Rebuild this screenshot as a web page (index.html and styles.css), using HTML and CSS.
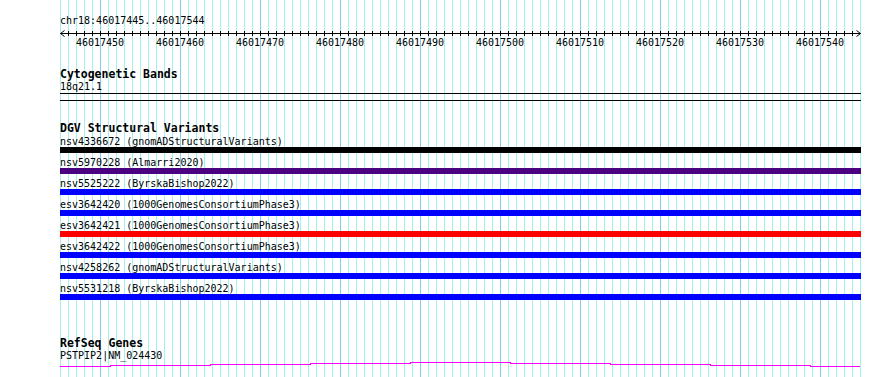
FILE: index.html
```html
<!DOCTYPE html>
<html lang="en">
<head>
  <meta charset="UTF-8" />
  <title>chr18:46017445..46017544</title>
  <link rel="stylesheet" href="styles.css">
</head>
<body>
  <div class="panel">
    <div class="ruler-title">chr18:46017445..46017544</div>
    <svg class="ruler" width="801" height="22" viewBox="0 0 801 22">
      <g id="ruler-ticks" stroke="#000" shape-rendering="crispEdges"></g>
      <path d="M0.5 6.5H800.5M4.5 3.5L0.5 6.5L4.5 9.5M796.5 3.5L800.5 6.5L796.5 9.5" stroke="#000" fill="none"/>
      <g id="ruler-labels" class="ruler-labels" text-anchor="middle"></g>
    </svg>

    <div class="track">
      <div class="track-name">Cytogenetic Bands</div>
      <div class="feat-label">18q21.1</div>
      <div class="band"></div>
    </div>

    <div class="track track-dgv">
      <div class="track-name">DGV Structural Variants</div>
      <div id="dgv-rows"></div>
    </div>

    <div class="track track-genes">
      <div class="track-name">RefSeq Genes</div>
      <div class="feat-label">PSTPIP2|NM_024430</div>
      <svg class="gene" width="801" height="8" viewBox="0 0 801 8">
        <polyline fill="none" stroke="#ff00ff" shape-rendering="crispEdges"
          points="0,5.5 50,5.5 50,4.5 150,4.5 150,3.5 250,3.5 250,2.5 350,2.5 350,1.5 450,1.5 450,2.5 550,2.5 550,3.5 650,3.5 650,4.5 750,4.5 750,5.5 800,5.5"/>
      </svg>
    </div>
  </div>

  <script>
    const ns = 'http://www.w3.org/2000/svg';
    const ticks = document.getElementById('ruler-ticks');
    const labels = document.getElementById('ruler-labels');
    const start = 46017445;

    for (let i = 1; i < 100; i++) {
      const x = i * 8 + 0.5;
      const line = document.createElementNS(ns, 'line');
      line.setAttribute('x1', x);
      line.setAttribute('x2', x);
      line.setAttribute('y1', 4);
      line.setAttribute('y2', 9);
      ticks.appendChild(line);
      if ((start + i) % 10 === 0) {
        const t = document.createElementNS(ns, 'text');
        t.setAttribute('x', i * 8);
        t.setAttribute('y', 19);
        t.textContent = start + i;
        labels.appendChild(t);
      }
    }

    const variants = [
      ['nsv4336672', 'gnomADStructuralVariants', 'black'],
      ['nsv5970228', 'Almarri2020', 'purple'],
      ['nsv5525222', 'ByrskaBishop2022', 'blue'],
      ['esv3642420', '1000GenomesConsortiumPhase3', 'blue'],
      ['esv3642421', '1000GenomesConsortiumPhase3', 'red'],
      ['esv3642422', '1000GenomesConsortiumPhase3', 'blue'],
      ['nsv4258262', 'gnomADStructuralVariants', 'blue'],
      ['nsv5531218', 'ByrskaBishop2022', 'blue']
    ];
    const rows = document.getElementById('dgv-rows');
    variants.forEach(([id, study, color]) => {
      const row = document.createElement('div');
      row.className = 'sv-row';
      row.innerHTML = `<div class="feat-label">${id} (${study})</div><div class="sv-bar sv-${color}"></div>`;
      rows.appendChild(row);
    });
  </script>
</body>
</html>
```

FILE: styles.css
```css
body {
  margin: 0;
  background: #fff;
  color: #000;
  font-family: "DejaVu Sans Mono", monospace;
  font-size: 10px;
}

.panel {
  margin-left: 60px;
  width: 801px;
  min-height: 377px;
  background-image:
    repeating-linear-gradient(90deg, transparent 0 40px, #84ccf0 40px 41px, transparent 41px 80px),
    repeating-linear-gradient(90deg, #a8eef0 0 1px, transparent 1px 8px);
  overflow: hidden;
}

.ruler-title {
  padding-top: 15px;
  line-height: 12px;
}

.ruler {
  display: block;
}

.ruler-labels {
  font-family: "DejaVu Sans Mono", monospace;
  font-size: 10px;
}

.track-name {
  font-weight: bold;
  font-size: 11.5px;
  line-height: 13px;
}

.feat-label {
  line-height: 11px;
  white-space: nowrap;
}

.track {
  margin-top: 19px;
}

.band {
  margin-top: 1px;
  height: 6px;
  border-top: 1px solid #000;
  border-bottom: 1px solid #000;
}

.track-dgv {
  margin-top: 21px;
}

.track-dgv .track-name {
  margin-bottom: 1px;
}

.sv-row {
  margin-bottom: 4px;
}

.sv-bar {
  height: 6px;
}

.sv-black { background: #000; }
.sv-purple { background: #4b0082; }
.sv-blue { background: #0000ff; }
.sv-red { background: #ff0000; }

.track-genes {
  margin-top: 37px;
}

.gene {
  display: block;
}
```
